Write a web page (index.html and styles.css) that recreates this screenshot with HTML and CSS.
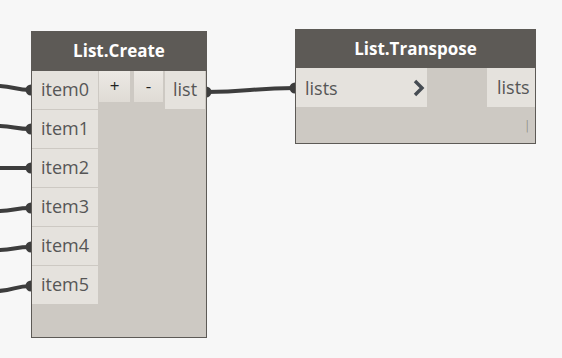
FILE: index.html
```
<!DOCTYPE html>
<html lang="en">
<head>
    <meta charset="UTF-8">
    <title>List.Create - List.Transpose</title>
    <link rel="stylesheet" href="styles.css">
</head>
<body>
    <div class="canvas">
        <svg class="wires" width="562" height="358" viewBox="0 0 562 358">
            <g fill="none" stroke="#3d3d3d" stroke-width="4" stroke-linecap="round">
                <path d="M-4 86 C 14 86, 14 90, 31 90"/>
                <path d="M-4 126 C 14 126, 14 129, 31 129"/>
                <path d="M-4 168 C 14 168, 14 168, 31 168"/>
                <path d="M-4 211 C 14 211, 14 208, 31 208"/>
                <path d="M-4 250 C 14 250, 14 247, 31 247"/>
                <path d="M-4 291 C 14 291, 14 286, 31 286"/>
                <path d="M206 92 C 250 92, 250 88, 295 88"/>
            </g>
            <g fill="#3d3d3d">
                <circle cx="31" cy="90" r="5.5"/>
                <circle cx="31" cy="129" r="5.5"/>
                <circle cx="31" cy="168" r="5.5"/>
                <circle cx="31" cy="208" r="5.5"/>
                <circle cx="31" cy="247" r="5.5"/>
                <circle cx="31" cy="286" r="5.5"/>
                <circle cx="206" cy="92" r="5.5"/>
                <circle cx="295" cy="88" r="5.5"/>
            </g>
        </svg>

        <div class="node node-create">
            <div class="node-title">List.Create</div>
            <div class="node-body">
                <div class="inputs">
                    <div class="port">item0</div>
                    <div class="port">item1</div>
                    <div class="port">item2</div>
                    <div class="port">item3</div>
                    <div class="port">item4</div>
                    <div class="port">item5</div>
                </div>
                <div class="controls">
                    <button class="node-button btn-add">+</button>
                    <button class="node-button btn-remove">-</button>
                </div>
                <div class="outputs">
                    <div class="port port-out">list</div>
                </div>
            </div>
        </div>

        <div class="node node-transpose">
            <div class="node-title">List.Transpose</div>
            <div class="port-row">
                <div class="port port-in-wide">
                    <span>lists</span>
                    <svg class="chevron" width="12" height="18" viewBox="0 0 12 18">
                        <polyline points="2,2 9,9 2,16" fill="none" stroke="#454b52" stroke-width="3.4"/>
                    </svg>
                </div>
                <div class="port port-out port-out-lists">lists</div>
            </div>
            <div class="lacing">|</div>
        </div>
    </div>
</body>
</html>
```

FILE: styles.css
```
body {
    margin: 0;
    padding: 0;
    background-color: #f7f7f7;
}

.canvas {
    position: relative;
    width: 562px;
    height: 358px;
    overflow: hidden;
}

.wires {
    position: absolute;
    left: 0;
    top: 0;
}

.node {
    position: absolute;
    box-sizing: border-box;
    background-color: #cdc9c3;
    border: 1px solid #5d5a56;
    font-family: "Open Sans", sans-serif;
}

.node-create {
    left: 31px;
    top: 31px;
    width: 176px;
    height: 307px;
}

.node-transpose {
    left: 295px;
    top: 29px;
    width: 241px;
    height: 115px;
}

.node-title {
    background-color: #5d5a56;
    color: white;
    font-weight: bold;
    font-size: 17px;
    height: 39px;
    line-height: 37px;
    text-align: center;
}

.node-transpose .node-title {
    height: 38px;
}

.node-body {
    display: flex;
    align-items: flex-start;
}

.inputs {
    width: 66px;
    display: flex;
    flex-direction: column;
    gap: 1px;
}

.port {
    box-sizing: border-box;
    height: 38px;
    line-height: 37px;
    padding-left: 9px;
    background-color: #e5e2dd;
    color: #565656;
    font-size: 18px;
}

.controls {
    display: flex;
    gap: 4px;
    margin-left: 1px;
}

.node-button {
    box-sizing: border-box;
    height: 31px;
    padding: 0 0 3px;
    border: none;
    background: linear-gradient(#ece9e4, #dfdbd5);
    color: #222;
    font-family: "Open Sans", sans-serif;
    font-size: 17px;
}

.btn-add {
    width: 31px;
}

.btn-remove {
    width: 29px;
}

.outputs {
    margin-left: 2px;
}

.port-out {
    width: 40px;
    padding-left: 8px;
}

.port-row {
    display: flex;
    justify-content: space-between;
}

.port-row .port {
    height: 39px;
    line-height: 38px;
}

.port-in-wide {
    width: 131px;
    display: flex;
    align-items: center;
    justify-content: space-between;
    padding-right: 2px;
}

.chevron {
    display: block;
}

.port-out-lists {
    width: 48px;
    padding-left: 10px;
}

.lacing {
    text-align: right;
    padding-right: 11px;
    margin-top: 12px;
    color: #7c7975;
    font-size: 12px;
    font-family: "DejaVu Sans", sans-serif;
    transform: scaleX(0.6);
    transform-origin: right;
}
```
